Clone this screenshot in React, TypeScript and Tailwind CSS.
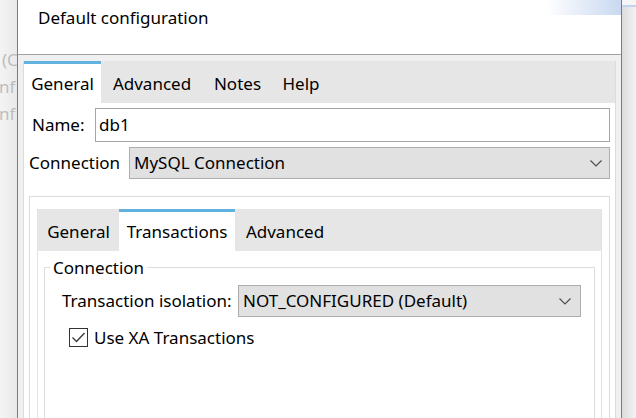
import React from 'react';

function Chevron() {
  return (
    <svg width="12" height="7" viewBox="0 0 12 7" className="shrink-0">
      <polyline points="0.5,0.5 6,6 11.5,0.5" fill="none" stroke="#4a4a4a" strokeWidth="1.1" />
    </svg>
  );
}

function Tab({ label, active, width }: { label: string; active?: boolean; width: string }) {
  return (
    <div
      className={
        'h-full flex items-center justify-center border-t-[3px] ' +
        width +
        (active ? ' bg-white border-[#62b2df]' : ' border-transparent')
      }
    >
      {label}
    </div>
  );
}

export default function App() {
  return (
    <div
      className="w-[636px] h-[418px] overflow-hidden flex text-[17px] text-black bg-[#f0f0f0]"
      style={{ fontFamily: '"Noto Sans", "Open Sans", sans-serif' }}
    >
      {/* background window behind the dialog */}
      <div className="w-[17px] shrink-0 bg-gradient-to-r from-[#f4f4f4] to-[#e9e9e9] text-[#bdbdbd] overflow-hidden whitespace-nowrap pt-[46px] leading-[27px]">
        <div className="pl-[2px]">(C</div>
        <div className="ml-[-1px]">nf</div>
        <div className="ml-[-1px]">nf</div>
      </div>

      {/* dialog */}
      <div className="w-[605px] shrink-0 border-x border-[#7c7c7c] flex flex-col overflow-hidden">
        <div className="h-[55px] shrink-0 bg-white border-b border-[#a3a3a3] flex justify-between">
          <div className="pl-[20px] pt-[5px]">Default configuration</div>
          <div className="w-[75px] h-[15px] bg-gradient-to-r from-white to-[#c9d8f0]" />
        </div>

        <div className="flex-1 min-h-0 bg-[#f0f0f0] pt-[6px] px-[5px]">
          <div className="h-[400px] flex flex-col border-x border-[#dcdcdc]">
            <div className="h-[42px] shrink-0 bg-[#e6e6e6] flex">
              <Tab label="General" active width="w-[77px]" />
              <Tab label="Advanced" width="w-[102px]" />
              <Tab label="Notes" width="w-[69px]" />
              <Tab label="Help" width="w-[58px]" />
            </div>

            <div className="flex-1 bg-white px-[5px] pt-[5px]">
              <div className="flex items-center h-[34px]">
                <span className="w-[66px] pl-[3px]">Name:</span>
                <div className="flex-1 h-full border border-[#a6a6a6] bg-white flex items-center px-[3px]">db1</div>
              </div>

              <div className="flex items-center h-[32px] mt-[5px]">
                <span className="w-[100px]">Connection</span>
                <div className="flex-1 h-full border border-[#adadad] bg-[#e1e1e1] flex items-center justify-between pl-[4px] pr-[7px]">
                  <span>MySQL Connection</span>
                  <Chevron />
                </div>
              </div>

              <div className="mt-[17px] border border-[#dcdcdc] pt-[12px] px-[7px] h-[240px]">
                <div className="h-full flex flex-col border-x border-[#e3e3e3]">
                  <div className="h-[42px] shrink-0 bg-[#e6e6e6] flex">
                    <Tab label="General" width="w-[81px]" />
                    <Tab label="Transactions" active width="w-[116px]" />
                    <Tab label="Advanced" width="w-[100px]" />
                  </div>

                  <div className="flex-1 bg-white px-[6px] pt-[5px]">
                    <fieldset className="border border-[#dcdcdc] h-[200px] pl-[17px] pr-[13px]">
                      <legend className="ml-[-12px] px-[3px] leading-[23px]">Connection</legend>
                      <div className="flex items-center h-[32px] mt-[6px]">
                        <span className="w-[176px]">Transaction isolation:</span>
                        <div className="flex-1 h-full border border-[#adadad] bg-[#e1e1e1] flex items-center justify-between pl-[4px] pr-[9px]">
                          <span>NOT_CONFIGURED (Default)</span>
                          <Chevron />
                        </div>
                      </div>
                      <div className="flex items-center mt-[8px] pl-[7px]">
                        <div className="w-[19px] h-[19px] border border-[#333333] bg-white flex items-center justify-center">
                          <svg width="15" height="15" viewBox="0 0 15 15">
                            <polyline points="1.5,7.5 5.5,11.5 13.5,3" fill="none" stroke="#3a3a3a" strokeWidth="1.4" />
                          </svg>
                        </div>
                        <span className="ml-[6px]">Use XA Transactions</span>
                      </div>
                    </fieldset>
                  </div>
                </div>
              </div>
            </div>
          </div>
        </div>
      </div>

      {/* right edge shadow */}
      <div className="flex-1 flex flex-col">
        <div className="h-[5px] bg-[#f6f6f6]" />
        <div className="h-[2px] bg-[#c3d5ee]" />
        <div className="flex-1 bg-gradient-to-r from-[#dcdcdc] to-[#f3f3f3]" />
      </div>
    </div>
  );
}
